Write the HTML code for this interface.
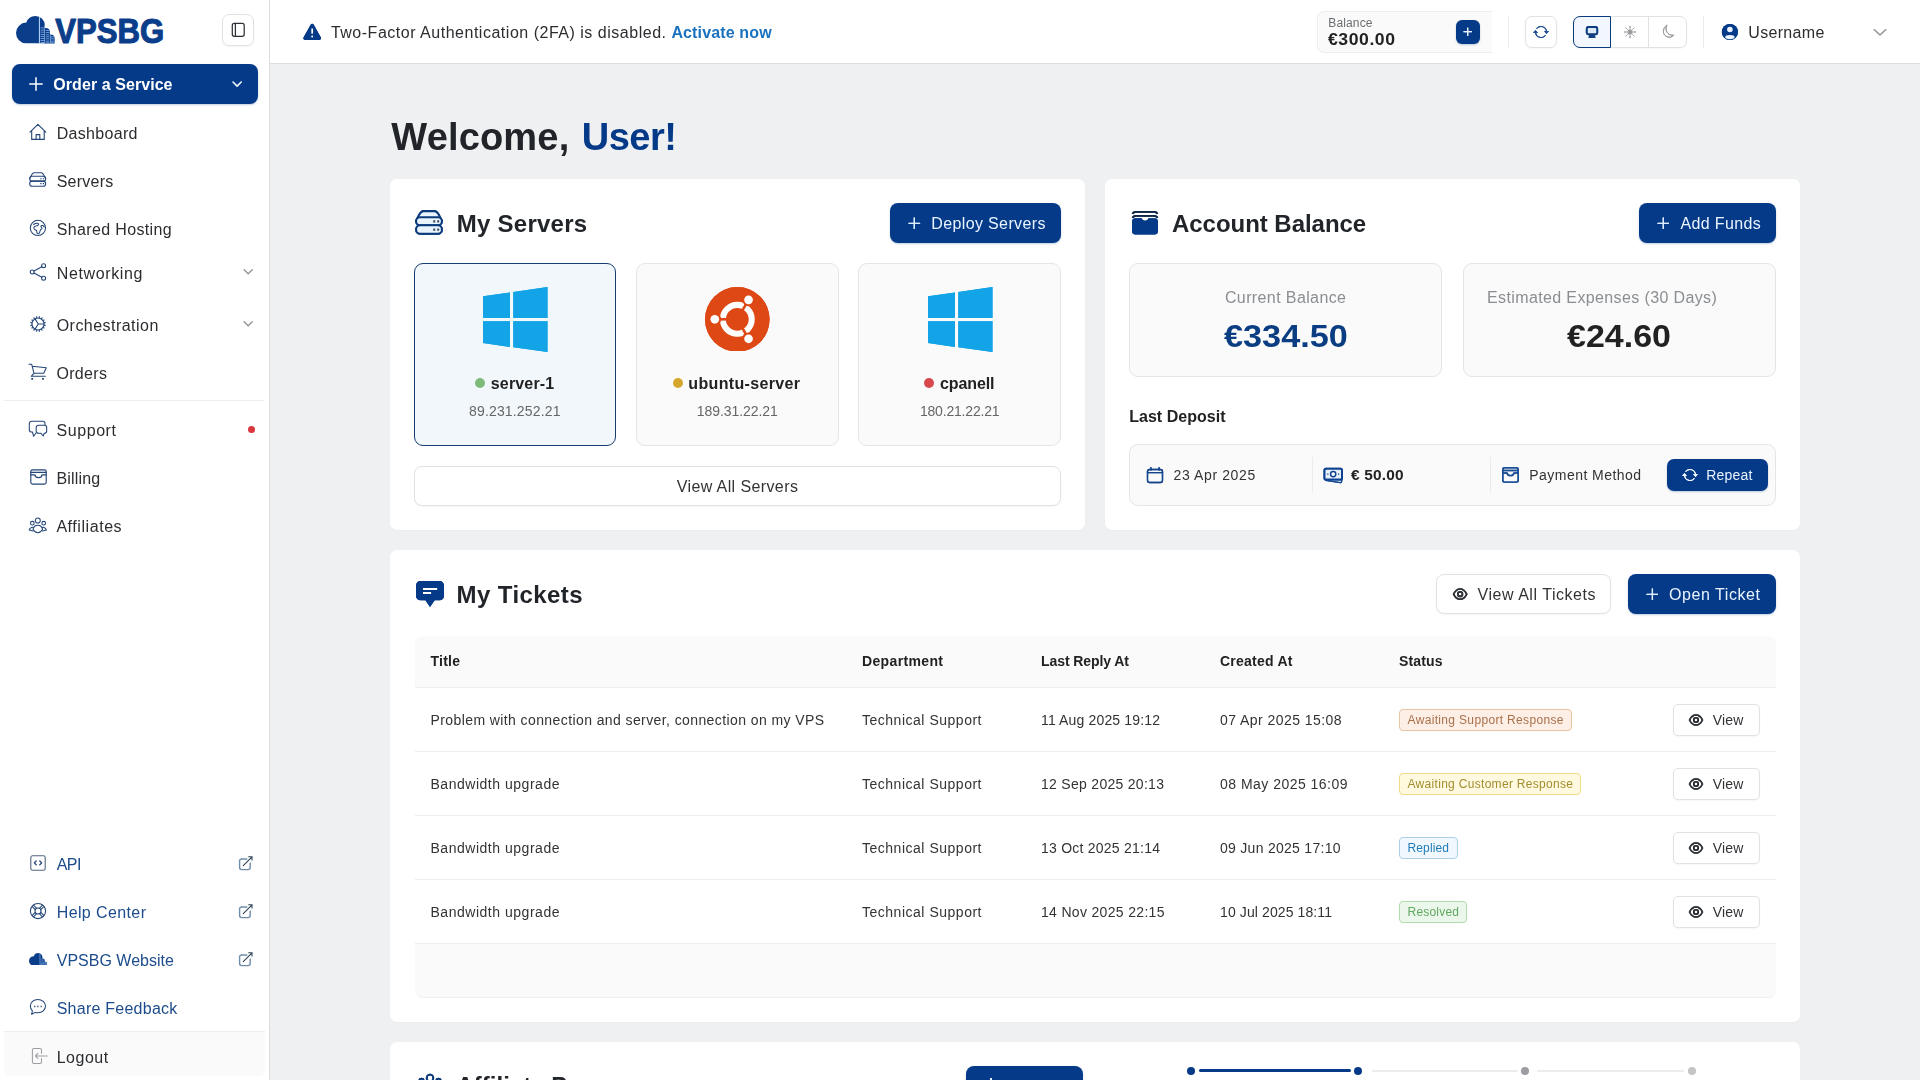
<!DOCTYPE html>
<html lang="en"><head><meta charset="utf-8"><title>VPSBG Dashboard</title>
<style>
*{box-sizing:border-box;margin:0;padding:0}
html,body{width:1920px;height:1080px;overflow:hidden}
body{position:relative;background:#eff0f1;font-family:"Liberation Sans",sans-serif;color:#26282b}
.abs,.t,.badge,svg.i{position:absolute}
.t{white-space:pre;display:block}
#texts{position:absolute;left:0;top:0;width:1920px;height:1080px;will-change:transform;pointer-events:none}
.sidebar{left:0;top:0;width:270px;height:1080px;background:#fff;border-right:1px solid #dcdcdd}
.topbar{left:270px;top:0;width:1650px;height:64px;background:#fff;border-bottom:1px solid #dddddd}
.card{background:#fff;border-radius:7px;box-shadow:0 1px 2px rgba(0,0,0,.02)}
.btn-p{background:#043a88;border-radius:8px;box-shadow:0 1px 2px rgba(6,59,133,.25)}
.btn-o{background:#fff;border:1px solid #e2e2e3;border-radius:8px;box-shadow:0 1px 2px rgba(0,0,0,.04)}
.tile{background:#fafafa;border:1px solid #e5e5e6;border-radius:9px}
.tile.active{background:#f1f7fb;border-color:#173d70}
.soft{background:#fafafa;border:1px solid #e5e5e6;border-radius:9px}
.vline{width:1px;background:#ebebec}
.hline{height:1px;background:#eeeeef}
.dot{border-radius:50%}
.badge{height:22px;border:1px solid;border-radius:4px}

</style></head>
<body>
<aside class="abs sidebar"></aside>
<header class="abs topbar"></header>

<!-- sidebar pieces -->
<div class="abs btn-o" style="left:222px;top:14px;width:32px;height:32px;border-radius:7px"></div>
<div class="abs btn-p" style="left:12px;top:64px;width:246px;height:40px;border-radius:8px"></div>
<div class="abs hline" style="left:4px;top:400px;width:260px"></div>
<div class="abs dot" style="left:247.5px;top:425.5px;width:7px;height:7px;background:#d9363e"></div>
<div class="abs" style="left:4px;top:1031px;width:261px;height:45px;background:#fafafa;border-top:1px solid #eeeeef;border-radius:0 0 6px 6px"></div>

<!-- topbar pieces -->
<div class="abs" style="left:1317px;top:11px;width:175px;height:42px;background:#fafafa;border:1px solid #eeeeef;border-right:none;border-radius:7px 0 0 7px"></div>
<div class="abs btn-p" style="left:1456px;top:20px;width:24px;height:24px;border-radius:6px"></div>
<div class="abs vline" style="left:1508px;top:16px;height:32px"></div>
<div class="abs btn-o" style="left:1525px;top:16px;width:32px;height:32px;border-radius:7px"></div>
<div class="abs btn-o" style="left:1573px;top:16px;width:114px;height:32px;border-radius:7px"></div>
<div class="abs vline" style="left:1648px;top:17px;height:30px;background:#e2e2e3"></div>
<div class="abs" style="left:1573px;top:16px;width:38px;height:32px;background:#f1f7fd;border:1.500px solid #0b3b7d;border-radius:7px 0 0 7px"></div>
<div class="abs vline" style="left:1703px;top:16px;height:32px"></div>

<!-- cards -->
<section class="abs card" style="left:390px;top:179px;width:695px;height:351px"></section>
<section class="abs card" style="left:1105px;top:179px;width:695px;height:351px"></section>
<section class="abs card" style="left:390px;top:550px;width:1410px;height:472px"></section>
<section class="abs card" style="left:390px;top:1042px;width:1410px;height:120px"></section>

<!-- my servers -->
<div class="abs btn-p" style="left:890px;top:203px;width:171px;height:40px"></div>
<div class="abs tile active" style="left:414px;top:263px;width:202px;height:183px"></div>
<div class="abs tile" style="left:636px;top:263px;width:203px;height:183px"></div>
<div class="abs tile" style="left:858px;top:263px;width:203px;height:183px"></div>
<div class="abs dot" style="left:475px;top:378px;width:10px;height:10px;background:#7dbb78"></div>
<div class="abs dot" style="left:673.3px;top:378px;width:10px;height:10px;background:#d4a72c"></div>
<div class="abs dot" style="left:924px;top:378px;width:10px;height:10px;background:#d9484c"></div>
<div class="abs btn-o" style="left:414px;top:466px;width:647px;height:40px;border-radius:8px"></div>

<!-- account balance -->
<div class="abs btn-p" style="left:1639px;top:203px;width:137px;height:40px"></div>
<div class="abs soft" style="left:1129px;top:263px;width:313px;height:114px"></div>
<div class="abs soft" style="left:1463px;top:263px;width:313px;height:114px"></div>
<div class="abs soft" style="left:1129px;top:444px;width:647px;height:62px"></div>
<div class="abs vline" style="left:1312px;top:457px;height:36px"></div>
<div class="abs vline" style="left:1490px;top:457px;height:36px"></div>
<div class="abs btn-p" style="left:1667px;top:459px;width:101px;height:32px;border-radius:7px"></div>

<!-- tickets -->
<div class="abs btn-o" style="left:1436px;top:574px;width:175px;height:40px"></div>
<div class="abs btn-p" style="left:1628px;top:574px;width:148px;height:40px"></div>
<div class="abs" style="left:415px;top:636px;width:1361px;height:52px;background:#fafafa;border-bottom:1px solid #eeeeef;border-radius:8px 8px 0 0"></div>
<div class="abs hline" style="left:415px;top:751px;width:1361px"></div>
<div class="abs hline" style="left:415px;top:815px;width:1361px"></div>
<div class="abs hline" style="left:415px;top:879px;width:1361px"></div>
<div class="abs" style="left:415px;top:943px;width:1361px;height:55px;background:#fafafa;border-top:1px solid #eeeeef;border-bottom:1px solid #eeeeef;border-radius:0 0 8px 8px"></div>
<div class="abs btn-o" style="left:1673px;top:704px;width:87px;height:32px;border-radius:5px"></div>
<div class="abs btn-o" style="left:1673px;top:768px;width:87px;height:32px;border-radius:5px"></div>
<div class="abs btn-o" style="left:1673px;top:832px;width:87px;height:32px;border-radius:5px"></div>
<div class="abs btn-o" style="left:1673px;top:896px;width:87px;height:32px;border-radius:5px"></div>
<div class="badge" style="left:1399px;top:709.0px;width:172.5px;background:#fdeee6;border-color:#e9c4a2"></div>
<div class="badge" style="left:1399px;top:773.0px;width:181.5px;background:#fff9e0;border-color:#f1dc86"></div>
<div class="badge" style="left:1399px;top:837.0px;width:58.5px;background:#f1f8fd;border-color:#a9d0ea"></div>
<div class="badge" style="left:1399px;top:901.0px;width:67.5px;background:#ecf7ec;border-color:#b0dcb0"></div>


<!-- affiliate peek -->
<div class="abs btn-p" style="left:966px;top:1066px;width:117px;height:40px"></div>
<div class="abs" style="left:1198.5px;top:1069px;width:152px;height:3px;background:#043a88;border-radius:2px"></div>
<div class="abs" style="left:1372px;top:1070px;width:146px;height:2px;background:#ececed;border-radius:1px"></div>
<div class="abs" style="left:1537px;top:1070px;width:147px;height:2px;background:#ececed;border-radius:1px"></div>
<div class="abs dot" style="left:1186.5px;top:1066.5px;width:8px;height:8px;background:#043a88"></div>
<div class="abs dot" style="left:1353.5px;top:1066.5px;width:8px;height:8px;background:#043a88"></div>
<div class="abs dot" style="left:1521px;top:1066.5px;width:8px;height:8px;background:#9b9da0"></div>
<div class="abs dot" style="left:1688px;top:1066.5px;width:8px;height:8px;background:#c4c5c7"></div>
<div class="abs" style="left:990px;top:1077.5px;width:1.500px;height:3px;background:#e8f0ff"></div>
<svg class="i" style="left:16px;top:14px" width="152" height="34" viewBox="0 0 152 34"><defs>
<clipPath id="cb"><rect x="0" y="0" width="38.9" height="27.4"/></clipPath>
<clipPath id="cl"><circle cx="10.4" cy="17" r="10.4"/><circle cx="19.4" cy="9.5" r="9.5"/><rect x="10" y="9.6" width="18.3" height="18"/><path d="M28.2 28V11.9h1.8a3.9 3.9 0 0 1 3.9 3.9V28z"/><path d="M33.8 28V18.600h1.100a3.900 3.900 0 0 1 3.900 3.900V28z"/></clipPath>
<g id="cloud"><g clip-path="url(#cb)"><g clip-path="url(#cl)">
<rect x="0" y="0" width="39" height="28" fill="#0a3e8a"/>
<g fill="#8fb8ea">
<rect x="22.9" y="0" width="1.1" height="28" fill="#a9cdf3"/>
<rect x="28.300" y="9" width="0.700" height="19"/>
<rect x="34" y="16" width="0.700" height="12"/>
<path d="M24.6 11.6h3.7v.75h-3.7zM24.6 13.7h3.7v.75h-3.7zM24.6 15.8h3.7v.75h-3.7zM24.6 17.9h3.7v.75h-3.7zM24.6 20h3.7v.75h-3.7zM24.6 22.1h3.7v.75h-3.7zM24.6 24.2h3.7v.75h-3.7zM24.6 26.3h3.7v.75h-3.7z"/>
<path d="M29.8 14.2h3.5v.75h-3.5zM29.8 16.3h3.5v.75h-3.5zM29.8 18.4h3.5v.75h-3.5zM29.8 20.5h3.5v.75h-3.5zM29.8 22.6h3.5v.75h-3.5zM29.8 24.7h3.5v.75h-3.5zM29.8 26.6h3.5v.8h-3.5z"/>
<path d="M34.8 20.5h3.6v.75h-3.6zM34.8 22.6h3.8v.75h-3.8zM34.8 24.7h4v.75h-4zM34.8 26.6h4v.8h-4z"/>
</g></g></g></g>
</defs><use href="#cloud" x="0" y="2"/><text x="39.2" y="29" font-family="Liberation Sans, sans-serif" font-weight="700" font-size="34.6" fill="#0a3e8a" stroke="#0a3e8a" stroke-width="1.1" stroke-linejoin="round" textLength="109" lengthAdjust="spacingAndGlyphs">VPSBG</text></svg>
<svg class="i" style="left:29px;top:952.6px" width="18.2" height="12.9" viewBox="0 0 38.9 27.4"><use href="#cloud"/></svg>
<svg class="i" style="left:231px;top:22px" width="15" height="16" viewBox="0 0 15 16" fill="none" stroke="#2f3236" stroke-width="1.25" stroke-linecap="round" stroke-linejoin="round" ><rect x="1.3" y="1.4" width="11.9" height="12.9" rx="2"/><path d="M4.4 1.4v12.9"/></svg>
<svg class="i" style="left:28px;top:76px" width="16" height="16" viewBox="0 0 16 16" fill="none" stroke="#fff" stroke-width="1.5" stroke-linecap="round" stroke-linejoin="round" ><path d="M8 1.8v12.4M1.8 8h12.4"/></svg>
<svg class="i" style="left:231px;top:79px" width="12" height="10" viewBox="0 0 12 10" fill="none" stroke="#eef8ff" stroke-width="1.6" stroke-linecap="round" stroke-linejoin="round" ><path d="M2 3l4.100 4.100 4.100-4.100"/></svg>
<svg class="i" style="left:29px;top:123px" width="19" height="18" viewBox="0 0 19 18" fill="none" stroke="#234577" stroke-width="1.1" stroke-linecap="round" stroke-linejoin="round" ><path d="M1 9.2L8.9 1.4l7.9 7.8M2.7 7.8v8.6h12.5V7.8M7.1 16.4v-4.8h3.7v4.8"/></svg>
<svg class="i" style="left:29.4px;top:171.8px" width="18.4" height="15.9" viewBox="0 0 18.4 15.9" fill="none" stroke="#234577" stroke-width="1.75" stroke-linecap="round" stroke-linejoin="round" ><g transform="scale(0.62,0.62)"><path d="M1.2 10.6C3 7.5 4.6 1.1 8.4 1.1h11.2c3.8 0 5.4 6.4 7.2 9.5" fill="none"/><rect x="1.1" y="6.9" width="25.8" height="7.8" rx="3.9" fill="none"/><rect x="1.1" y="14.7" width="25.8" height="8.2" rx="4.1" fill="none"/><path d="M18.2 9.9h2v2h-2zM22.2 9.9h2v2h-2zM18.2 17.9h2v2h-2zM22.2 17.9h2v2h-2z" fill="#234577" stroke="none"/></g></svg>
<svg class="i" style="left:29px;top:219px" width="18" height="18" viewBox="0 0 18 18" fill="none" stroke="#234577" stroke-width="1.05" stroke-linecap="round" stroke-linejoin="round" ><circle cx="8.9" cy="8.9" r="7.6"/><path d="M4.60 5.60C5.20 5.27 5.17 5.07 6.40 4.60C7.63 4.13 7.23 4.03 8.30 4.20C9.37 4.37 9.50 4.33 9.60 5.10C9.70 5.87 9.63 5.83 8.60 6.50C7.57 7.17 7.73 6.43 6.50 7.10C5.27 7.77 5.20 7.43 4.90 8.50C4.60 9.57 4.73 9.27 5.60 10.30C6.47 11.33 6.70 10.43 7.50 11.60C8.30 12.77 7.40 12.73 8.00 13.80C8.60 14.87 8.43 15.00 9.30 14.80C10.17 14.60 9.87 14.50 10.60 13.20C11.33 11.90 10.70 12.27 11.50 10.90C12.30 9.53 12.87 10.27 13.00 9.10C13.13 7.93 11.70 8.23 11.90 7.40C12.10 6.57 12.50 6.40 13.60 6.60C14.70 6.80 14.67 7.53 15.20 8.00"/></svg>
<svg class="i" style="left:29px;top:262px" width="19" height="20" viewBox="0 0 19 20" fill="none" stroke="#234577" stroke-width="1.05" stroke-linecap="round" stroke-linejoin="round" ><circle cx="14.6" cy="3.7" r="2"/><circle cx="3.2" cy="10" r="2"/><circle cx="14.6" cy="16.2" r="2"/><path d="M5 9l7.8-4.300M5 11l7.800 4.300"/></svg>
<svg class="i" style="left:28.8px;top:315px" width="18" height="18" viewBox="0 0 18 18" fill="none" stroke="#234577" stroke-width="1.05" stroke-linecap="round" stroke-linejoin="round" ><circle cx="9" cy="9" r="6"/><path d="M15.08 10.21L16.65 10.52M14.16 12.44L15.49 13.33M12.44 14.16L13.33 15.49M10.21 15.08L10.52 16.65M7.79 15.08L7.48 16.65M5.56 14.16L4.67 15.49M3.84 12.44L2.51 13.33M2.92 10.21L1.35 10.52M2.92 7.79L1.35 7.48M3.84 5.56L2.51 4.67M5.56 3.84L4.67 2.51M7.79 2.92L7.48 1.35M10.21 2.92L10.52 1.35M12.44 3.84L13.33 2.51M14.16 5.56L15.49 4.67M15.08 7.79L16.65 7.48" stroke-width="1.250" stroke-linecap="butt"/><path d="M9.30 9.00L14.90 9.00M9.30 9.00L6.05 14.11M9.30 9.00L6.05 3.89"/></svg>
<svg class="i" style="left:28px;top:363px" width="20" height="18" viewBox="0 0 20 18" fill="none" stroke="#234577" stroke-width="1.05" stroke-linecap="round" stroke-linejoin="round" ><path d="M1 1.300h2.700l2.300 9h9.700l2.600-5.600L4.400 3.200M6 10.300l-2.800 3h14.100"/><path d="M3.300 15h1.800v1.800H3.300zM14.100 15h1.800v1.800h-1.800z" fill="#234577" stroke="none"/></svg>
<svg class="i" style="left:28px;top:420px" width="20" height="18" viewBox="0 0 20 18" fill="none" stroke="#234577" stroke-width="1.05" stroke-linecap="round" stroke-linejoin="round" ><path d="M17 4.700V3.500c0-1.300-1-2.300-2.300-2.300H3.600c-1.300 0-2.300 1-2.300 2.300v6.200c0 1.300 1 2.300 2.300 2.300h.9l1.100 4.300L8 13"/><path d="M10.500 5.200h5.900c1.300 0 2.300 1 2.300 2.300v3.500c0 1.300-1 2.300-2.300 2.300h-.3l-.8 2.700-2.300-2.700h-2.500c-1.300 0-2.300-1-2.300-2.300V7.500c0-1.300 1-2.300 2.300-2.300z"/></svg>
<svg class="i" style="left:29.5px;top:468.9px" width="18" height="17" viewBox="0 0 18 17" fill="none" stroke="#234577" stroke-width="1.15" stroke-linecap="round" stroke-linejoin="round" ><g transform="scale(1)"><rect x="0.800" y="0.800" width="15.400" height="14.300" rx="1.800"/><path d="M0.800 3.400h15.400M0.800 5.900h4.200c.2 1.600 1.500 2.700 3.500 2.700s3.300-1.100 3.500-2.700h4.200"/></g></svg>
<svg class="i" style="left:28px;top:516px" width="20" height="18" viewBox="0 0 20 18" fill="none" stroke="#234577" stroke-width="1.05" stroke-linecap="round" stroke-linejoin="round" ><circle cx="9.800" cy="4.500" r="2.500"/><circle cx="4.300" cy="7.200" r="1.850"/><circle cx="15.700" cy="7.200" r="1.850"/><path d="M5 13.300c.6-2.400 2.400-4 4.800-4s4.200 1.600 4.800 4c-1.200 2.200-2.900 3.400-4.800 3.400S6.200 15.500 5 13.300z"/><path d="M5.700 11.500c-.9-.3-1.700-.3-2.200 0C2.400 12 1.600 13 1.200 14l3.800 1M13.900 11.500c.9-.3 1.700-.3 2.200 0 1.100.5 1.900 1.500 2.300 2.500l-3.800 1"/></svg>
<svg class="i" style="left:242px;top:267px" width="13" height="10" viewBox="0 0 13 10" fill="none" stroke="#8d9095" stroke-width="1.25" stroke-linecap="round" stroke-linejoin="round" ><path d="M2.100 2.700l4.100 4.100 4.100-4.100"/></svg>
<svg class="i" style="left:242px;top:319px" width="13" height="10" viewBox="0 0 13 10" fill="none" stroke="#8d9095" stroke-width="1.25" stroke-linecap="round" stroke-linejoin="round" ><path d="M2.100 2.700l4.100 4.100 4.100-4.100"/></svg>
<svg class="i" style="left:30px;top:855px" width="17" height="17" viewBox="0 0 17 17" fill="none" stroke="#234577" stroke-width="1.1" stroke-linecap="round" stroke-linejoin="round" ><rect x="0.800" y="0.800" width="14.400" height="14.400" rx="1.800" stroke="#52657f"/><path d="M6.200 6L4.300 7.900l1.900 1.900M9.800 6l1.900 1.900-1.900 1.900" stroke-width="1.300"/></svg>
<svg class="i" style="left:28.9px;top:901.9px" width="18" height="18" viewBox="0 0 18 18" fill="none" stroke="#234577" stroke-width="1.05" stroke-linecap="round" stroke-linejoin="round" ><circle cx="9" cy="9" r="7.600"/><circle cx="9" cy="9" r="3"/><path d="M11.72 10.38L14.83 13.49M10.38 11.72L13.49 14.83M7.62 11.72L4.51 14.83M6.28 10.38L3.17 13.49M6.28 7.62L3.17 4.51M7.62 6.28L4.51 3.17M10.38 6.28L13.49 3.17M11.72 7.62L14.83 4.51"/></svg>
<svg class="i" style="left:29px;top:998px" width="18" height="18" viewBox="0 0 18 18" fill="none" stroke="#234577" stroke-width="1.05" stroke-linecap="round" stroke-linejoin="round" ><path d="M8.900 1.400c4.200 0 7.600 3 7.600 6.700s-3.400 6.700-7.600 6.700c-.9 0-1.800-.1-2.600-.4l-3.700 1.900.8-3.500C2.100 11.600 1.300 9.900 1.300 8.100c0-3.700 3.400-6.700 7.600-6.700z"/><path d="M5 7.800h1.400v1.400H5zM8.200 7.800h1.400v1.400H8.200zM11.500 7.800h1.400v1.400h-1.400z" fill="#52657f" stroke="none"/></svg>
<svg class="i" style="left:31px;top:1047px" width="18" height="18" viewBox="0 0 18 18" fill="none" stroke="#9b9da0" stroke-width="1.05" stroke-linecap="round" stroke-linejoin="round" ><path d="M10.500 6.300V3.100c0-.9-.7-1.600-1.600-1.600H3c-.9 0-1.600.7-1.600 1.600v11.800c0 .9.700 1.600 1.600 1.600h5.900c.9 0 1.600-.7 1.600-1.600v-3.300"/><path d="M16.300 8.900H4.600M6.900 6.300L4.400 8.900l2.500 2.600"/></svg>
<svg class="i" style="left:238px;top:855.5px" width="16" height="15" viewBox="0 0 16 15" fill="none"  ><path d="M9.300 3H3.600c-1.100 0-2 .9-2 2v6.600c0 1.100.9 2 2 2h6.600c1.100 0 2-.9 2-2V6.500" stroke="#6e8cab" stroke-width="1.400"/><path d="M5 9.800l9-9M10.300.8H14v3.700" stroke="#2c3f57" stroke-width="1.100"/></svg>
<svg class="i" style="left:238px;top:903.5px" width="16" height="15" viewBox="0 0 16 15" fill="none"  ><path d="M9.300 3H3.600c-1.100 0-2 .9-2 2v6.600c0 1.100.9 2 2 2h6.600c1.100 0 2-.9 2-2V6.500" stroke="#6e8cab" stroke-width="1.400"/><path d="M5 9.800l9-9M10.300.8H14v3.700" stroke="#2c3f57" stroke-width="1.100"/></svg>
<svg class="i" style="left:238px;top:951.5px" width="16" height="15" viewBox="0 0 16 15" fill="none"  ><path d="M9.300 3H3.600c-1.100 0-2 .9-2 2v6.600c0 1.100.9 2 2 2h6.600c1.100 0 2-.9 2-2V6.500" stroke="#6e8cab" stroke-width="1.400"/><path d="M5 9.800l9-9M10.300.8H14v3.700" stroke="#2c3f57" stroke-width="1.100"/></svg>
<svg class="i" style="left:302px;top:22px" width="21" height="19" viewBox="0 0 21 19" fill="none"  ><path d="M10.200 1.700c.6 0 1.100.3 1.400.9l7.300 13c.6 1.100-.100 2.300-1.400 2.300H2.900c-1.300 0-2-1.200-1.400-2.300l7.300-13c.3-.6.800-.9 1.400-.9z" fill="#043a88" stroke="none"/><path d="M10.200 6.500v5.200" stroke="#fff" stroke-width="1.700"/><circle cx="10.200" cy="14.400" r="1" fill="#fff" stroke="none"/></svg>
<svg class="i" style="left:1463.3px;top:27.3px" width="9.4" height="9.4" viewBox="0 0 9.4 9.4" fill="none" stroke="#eaf2ff" stroke-width="1.2" stroke-linecap="round" stroke-linejoin="round" ><path d="M4.7 1v7.4M1 4.7h7.4"/></svg>
<svg class="i" style="left:1533px;top:24px;color:#1f4f95" width="16" height="16" viewBox="0 0 16 16" fill="#1f4f95"><path d="M11.534 7h3.932a.25.25 0 0 1 .192.410l-1.966 2.360a.25.25 0 0 1-.384 0l-1.966-2.360a.25.25 0 0 1 .192-.410zm-11 2h3.932a.25.25 0 0 0 .192-.410L2.692 6.230a.25.25 0 0 0-.384 0L.342 8.590A.25.25 0 0 0 .534 9z"/><path d="M8 3c-1.552 0-2.940.707-3.857 1.818a.5.5 0 1 1-.771-.636A6.002 6.002 0 0 1 13.917 7H12.900A5.002 5.002 0 0 0 8 3zM3.100 9a5.002 5.002 0 0 0 8.757 2.182.5.5 0 1 1 .771.636A6.002 6.002 0 0 1 2.083 9H3.100z"/></svg>
<svg class="i" style="left:1585px;top:25px" width="14" height="14" viewBox="0 0 14 14" fill="none"  ><rect x="1.800" y="2" width="10.400" height="7.300" rx="1.800" fill="#dbe8f7" stroke="#0b3b7d" stroke-width="1.900"/><path d="M4.300 10.200h5.400l.9 2.500H3.400z" fill="#0b3b7d" stroke="none"/></svg>
<svg class="i" style="left:1621.8px;top:24px" width="16" height="16" viewBox="0 0 16 16" fill="none" stroke="#a4a6a9" stroke-width="1" stroke-linecap="round" stroke-linejoin="round" ><circle cx="8" cy="8" r="2.500" fill="#9a9c9f" stroke="none"/><path d="M11.90 8.00L13.70 8.00M10.76 10.76L12.03 12.03M8.00 11.90L8.00 13.70M5.24 10.76L3.97 12.03M4.10 8.00L2.30 8.00M5.24 5.24L3.97 3.97M8.00 4.10L8.00 2.30M10.76 5.24L12.03 3.97"/></svg>
<svg class="i" style="left:1660px;top:24px" width="16" height="16" viewBox="0 0 16 16" fill="none" stroke="#9a9c9f" stroke-width="1" stroke-linecap="round" stroke-linejoin="round" ><path d="M6.700 1.600C4.200 2.900 2.900 5.700 3.500 8.500c.7 3.200 3.800 5.200 7 4.600 1.300-.3 2.400-.9 3.200-1.900-3.600.500-6.800-1.700-7.500-5.100-.3-1.600-.100-3.200.5-4.500z"/></svg>
<svg class="i" style="left:1721px;top:23px" width="18" height="18" viewBox="0 0 18 18" fill="none"  ><circle cx="8.900" cy="9" r="8.100" fill="#043a88" stroke="none"/><circle cx="8.900" cy="6.500" r="2.800" fill="#eef4ff" stroke="none"/><ellipse cx="8.900" cy="14.100" rx="4.700" ry="2.100" fill="#eef4ff" stroke="none"/></svg>
<svg class="i" style="left:1873px;top:28px" width="14" height="9" viewBox="0 0 14 9" fill="none" stroke="#9a9c9f" stroke-width="1.1" stroke-linecap="round" stroke-linejoin="round" ><path d="M1.200 1.500l5.800 5.500 5.800-5.500"/></svg>
<svg class="i" style="left:415.4px;top:210.2px" width="29.0" height="26.0" viewBox="0 0 29.0 26.0" fill="none" stroke="#0b3b7d" stroke-width="2.0" stroke-linecap="round" stroke-linejoin="round" ><g transform="scale(1.0,1.04)"><path d="M1.2 10.6C3 7.5 4.6 1.1 8.4 1.1h11.2c3.8 0 5.4 6.4 7.2 9.5" fill="#eaf4fc"/><rect x="1.1" y="6.9" width="25.8" height="7.8" rx="3.9" fill="#eaf4fc"/><rect x="1.1" y="14.7" width="25.8" height="8.2" rx="4.1" fill="#eaf4fc"/><path d="M18.2 9.9h2v2h-2zM22.2 9.9h2v2h-2zM18.2 17.9h2v2h-2zM22.2 17.9h2v2h-2z" fill="#3a4a5c" stroke="none"/></g></svg>
<svg class="i" style="left:908.1px;top:216.7px" width="12.6" height="12.6" viewBox="0 0 12.6 12.6" fill="none" stroke="#dcecff" stroke-width="1.3" stroke-linecap="round" stroke-linejoin="round" ><path d="M6.3 1v10.6M1 6.3h10.6"/></svg>
<svg class="i" style="left:1656.6px;top:216.7px" width="12.6" height="12.6" viewBox="0 0 12.6 12.6" fill="none" stroke="#dcecff" stroke-width="1.3" stroke-linecap="round" stroke-linejoin="round" ><path d="M6.3 1v10.6M1 6.3h10.6"/></svg>
<svg class="i" style="left:1645.6px;top:587.6px" width="12.8" height="12.8" viewBox="0 0 12.8 12.8" fill="none" stroke="#dcecff" stroke-width="1.3" stroke-linecap="round" stroke-linejoin="round" ><path d="M6.4 1v10.8M1 6.4h10.8"/></svg>
<svg class="i" style="left:1131px;top:210px" width="28" height="26" viewBox="0 0 28 26" fill="none"  ><path d="M1.100 9.200c0-1.800 1.400-3.200 3.200-3.200h6.500c.3 1.700 1.600 2.900 3.300 2.900s3-1.200 3.300-2.900h6.300c1.800 0 3.200 1.400 3.200 3.200v12.400c0 1.800-1.400 3.200-3.200 3.200H4.300c-1.800 0-3.200-1.400-3.200-3.200z" transform="translate(0,3.200) scale(1,.86)" fill="#043a88" stroke="none"/><path d="M1.400 3.800c.9-1.300 1.900-1.900 3.400-1.900h18.400c1.500 0 2.500.6 3.400 1.900M1.400 7.700c.9-1.300 1.900-1.900 3.400-1.900h18.400c1.500 0 2.500.6 3.400 1.900" stroke="#0c2748" stroke-width="1.700" fill="none"/></svg>
<svg class="i" style="left:482.7px;top:286.6px" width="65" height="65" viewBox="0 0 65 65" fill="#12a4e6"><path d="M0 9.200L27 5.400v25.700H0zM30.300 4.900L64.500 0v31.100H30.300zM0 34.200h27v25.700L0 56zM30.300 34.200h34.200V65l-34.200-4.800z"/></svg>
<svg class="i" style="left:927.9px;top:286.6px" width="65" height="65" viewBox="0 0 65 65" fill="#12a4e6"><path d="M0 9.200L27 5.400v25.700H0zM30.300 4.900L64.500 0v31.100H30.300zM0 34.200h27v25.700L0 56zM30.300 34.200h34.200V65l-34.200-4.800z"/></svg>
<svg class="i" style="left:705.0px;top:286.5px" width="64.6" height="64.6" viewBox="0 0 64 64"><circle cx="32" cy="32" r="32" fill="#dd4814"/><circle cx="32" cy="32" r="14.300" fill="none" stroke="#fff" stroke-width="6"/><path d="M36.50 39.79L42.00 49.32" stroke="#dd4814" stroke-width="2.600"/><path d="M23.00 32.00L12.00 32.00" stroke="#dd4814" stroke-width="2.600"/><path d="M36.50 24.21L42.00 14.68" stroke="#dd4814" stroke-width="2.600"/><circle cx="9.70" cy="32.00" r="6.300" fill="#dd4814"/><circle cx="9.70" cy="32.00" r="4.300" fill="#fff"/><circle cx="43.15" cy="12.69" r="6.300" fill="#dd4814"/><circle cx="43.15" cy="12.69" r="4.300" fill="#fff"/><circle cx="43.15" cy="51.31" r="6.300" fill="#dd4814"/><circle cx="43.15" cy="51.31" r="4.300" fill="#fff"/></svg>
<svg class="i" style="left:1146px;top:466px" width="18" height="18" viewBox="0 0 18 18" fill="none" stroke="#15458d" stroke-width="1.35" stroke-linecap="round" stroke-linejoin="round" ><rect x="1.500" y="3.500" width="15" height="13" rx="2.200"/><path d="M1.500 6.600h15M4.900 1.700v2.200M13.100 1.700v2.200"/></svg>
<svg class="i" style="left:1323px;top:467px" width="21" height="17" viewBox="0 0 21 17" fill="none"  ><path d="M2.700 13.300l14.600 2.300c.6.100 1.100-.3 1.200-.9l.300-1.700" stroke="#1a4e96" stroke-width="1.300" fill="none"/><rect x="1.500" y="1.700" width="17.500" height="10.800" rx="1.600" fill="#e6effa" stroke="#0f4391" stroke-width="2"/><circle cx="10.200" cy="7.100" r="2.600" fill="#fff" stroke="#0f4391" stroke-width="1.500"/><path d="M4.200 7.100h1.200M15 7.100h1.200" stroke="#0f4391" stroke-width="1.300"/></svg>
<svg class="i" style="left:1502px;top:467px" width="18.0" height="17.0" viewBox="0 0 18.0 17.0" fill="none" stroke="#1a4e96" stroke-width="1.45" stroke-linecap="round" stroke-linejoin="round" ><g transform="scale(1.0)"><rect x="0.800" y="0.800" width="15.400" height="14.300" rx="1.800"/><path d="M0.800 3.400h15.400M0.800 5.900h4.200c.2 1.600 1.500 2.700 3.500 2.700s3.300-1.100 3.500-2.700h4.200"/></g></svg>
<svg class="i" style="left:1682px;top:467px;color:#f2f7ff" width="16" height="16" viewBox="0 0 16 16" fill="#f2f7ff"><path d="M11.534 7h3.932a.25.25 0 0 1 .192.410l-1.966 2.360a.25.25 0 0 1-.384 0l-1.966-2.360a.25.25 0 0 1 .192-.410zm-11 2h3.932a.25.25 0 0 0 .192-.410L2.692 6.230a.25.25 0 0 0-.384 0L.342 8.590A.25.25 0 0 0 .534 9z"/><path d="M8 3c-1.552 0-2.940.707-3.857 1.818a.5.5 0 1 1-.771-.636A6.002 6.002 0 0 1 13.917 7H12.900A5.002 5.002 0 0 0 8 3zM3.100 9a5.002 5.002 0 0 0 8.757 2.182.5.5 0 1 1 .771.636A6.002 6.002 0 0 1 2.083 9H3.100z"/></svg>
<svg class="i" style="left:415px;top:580px" width="30" height="28" viewBox="0 0 30 28" fill="none"  ><path d="M5.400 1h19.200C27 1 29 3 29 5.400v10.500c0 2.400-2 4.400-4.400 4.400h-4.900L15 27l-4.600-6.700h-5C3 20.300 1 18.300 1 15.900V5.400C1 3 3 1 5.400 1z" fill="#043a88" stroke="none"/><path d="M8 8h14.200v2.100H8zM8 12h8.100v2.100H8z" fill="#fff" stroke="none"/></svg>
<svg class="i" style="left:1452.1px;top:585.9px;color:#2f3236" width="16.3" height="16.3" viewBox="0 0 16 16" fill="#2f3236"><path d="M1.500 8C3.100 4.700 5.500 2.950 8 2.950s4.900 1.750 6.500 5.050c-1.600 3.300-4 5.050-6.500 5.050S3.100 11.300 1.500 8z" fill="none" stroke="currentColor" stroke-width="1.500" stroke-linejoin="round"/><circle cx="8" cy="8" r="2.250" fill="none" stroke="currentColor" stroke-width="1.700"/></svg>
<svg class="i" style="left:1688px;top:712px;color:#2f3236" width="16" height="16" viewBox="0 0 16 16" fill="#2f3236"><path d="M1.500 8C3.100 4.700 5.500 2.950 8 2.950s4.900 1.750 6.500 5.050c-1.600 3.300-4 5.050-6.500 5.050S3.100 11.300 1.500 8z" fill="none" stroke="currentColor" stroke-width="1.500" stroke-linejoin="round"/><circle cx="8" cy="8" r="2.250" fill="none" stroke="currentColor" stroke-width="1.700"/></svg>
<svg class="i" style="left:1688px;top:776px;color:#2f3236" width="16" height="16" viewBox="0 0 16 16" fill="#2f3236"><path d="M1.500 8C3.100 4.700 5.500 2.950 8 2.950s4.900 1.750 6.500 5.050c-1.600 3.300-4 5.050-6.500 5.050S3.100 11.300 1.500 8z" fill="none" stroke="currentColor" stroke-width="1.500" stroke-linejoin="round"/><circle cx="8" cy="8" r="2.250" fill="none" stroke="currentColor" stroke-width="1.700"/></svg>
<svg class="i" style="left:1688px;top:840px;color:#2f3236" width="16" height="16" viewBox="0 0 16 16" fill="#2f3236"><path d="M1.500 8C3.100 4.700 5.500 2.950 8 2.950s4.900 1.750 6.500 5.050c-1.600 3.300-4 5.050-6.500 5.050S3.100 11.300 1.500 8z" fill="none" stroke="currentColor" stroke-width="1.500" stroke-linejoin="round"/><circle cx="8" cy="8" r="2.250" fill="none" stroke="currentColor" stroke-width="1.700"/></svg>
<svg class="i" style="left:1688px;top:904px;color:#2f3236" width="16" height="16" viewBox="0 0 16 16" fill="#2f3236"><path d="M1.500 8C3.100 4.700 5.500 2.950 8 2.950s4.900 1.750 6.500 5.050c-1.600 3.300-4 5.050-6.500 5.050S3.100 11.300 1.500 8z" fill="none" stroke="currentColor" stroke-width="1.500" stroke-linejoin="round"/><circle cx="8" cy="8" r="2.250" fill="none" stroke="currentColor" stroke-width="1.700"/></svg>
<svg class="i" style="left:416px;top:1070px" width="30" height="12" viewBox="0 0 30 12" fill="none" stroke="#0b3b7d" stroke-width="1.8" stroke-linecap="round" stroke-linejoin="round" ><circle cx="14" cy="8" r="3.300"/><circle cx="5.500" cy="11" r="2.300"/><circle cx="22.500" cy="11" r="2.300"/></svg>
<svg class="i" style="left:302px;top:22px" width="21" height="19" viewBox="0 0 21 19" fill="none"  ><path d="M10.200 1.700c.6 0 1.100.3 1.400.9l7.300 13c.6 1.100-.100 2.300-1.400 2.300H2.900c-1.300 0-2-1.200-1.400-2.300l7.300-13c.3-.6.800-.9 1.400-.9z" fill="#043a88" stroke="none"/><path d="M10.200 6.500v5.200" stroke="#fff" stroke-width="1.700"/><circle cx="10.200" cy="14.400" r="1" fill="#fff" stroke="none"/></svg>
<svg class="i" style="left:1463.3px;top:27.3px" width="9.4" height="9.4" viewBox="0 0 9.4 9.4" fill="none" stroke="#eaf2ff" stroke-width="1.2" stroke-linecap="round" stroke-linejoin="round" ><path d="M4.7 1v7.4M1 4.7h7.4"/></svg>
<svg class="i" style="left:1533px;top:24px;color:#1f4f95" width="16" height="16" viewBox="0 0 16 16" fill="#1f4f95"><path d="M11.534 7h3.932a.25.25 0 0 1 .192.410l-1.966 2.360a.25.25 0 0 1-.384 0l-1.966-2.360a.25.25 0 0 1 .192-.410zm-11 2h3.932a.25.25 0 0 0 .192-.410L2.692 6.230a.25.25 0 0 0-.384 0L.342 8.590A.25.25 0 0 0 .534 9z"/><path d="M8 3c-1.552 0-2.940.707-3.857 1.818a.5.5 0 1 1-.771-.636A6.002 6.002 0 0 1 13.917 7H12.900A5.002 5.002 0 0 0 8 3zM3.100 9a5.002 5.002 0 0 0 8.757 2.182.5.5 0 1 1 .771.636A6.002 6.002 0 0 1 2.083 9H3.100z"/></svg>
<svg class="i" style="left:1585px;top:25px" width="14" height="14" viewBox="0 0 14 14" fill="none"  ><rect x="1.800" y="2" width="10.400" height="7.300" rx="1.800" fill="#dbe8f7" stroke="#0b3b7d" stroke-width="1.900"/><path d="M4.300 10.200h5.400l.9 2.500H3.400z" fill="#0b3b7d" stroke="none"/></svg>
<svg class="i" style="left:1621.8px;top:24px" width="16" height="16" viewBox="0 0 16 16" fill="none" stroke="#a4a6a9" stroke-width="1" stroke-linecap="round" stroke-linejoin="round" ><circle cx="8" cy="8" r="2.500" fill="#9a9c9f" stroke="none"/><path d="M11.90 8.00L13.70 8.00M10.76 10.76L12.03 12.03M8.00 11.90L8.00 13.70M5.24 10.76L3.97 12.03M4.10 8.00L2.30 8.00M5.24 5.24L3.97 3.97M8.00 4.10L8.00 2.30M10.76 5.24L12.03 3.97"/></svg>
<svg class="i" style="left:1660px;top:24px" width="16" height="16" viewBox="0 0 16 16" fill="none" stroke="#9a9c9f" stroke-width="1" stroke-linecap="round" stroke-linejoin="round" ><path d="M6.700 1.600C4.200 2.900 2.900 5.700 3.500 8.500c.7 3.200 3.800 5.200 7 4.600 1.300-.3 2.400-.9 3.200-1.900-3.600.500-6.800-1.700-7.500-5.100-.3-1.600-.100-3.200.5-4.500z"/></svg>
<svg class="i" style="left:1721px;top:23px" width="18" height="18" viewBox="0 0 18 18" fill="none"  ><circle cx="8.900" cy="9" r="8.100" fill="#043a88" stroke="none"/><circle cx="8.900" cy="6.500" r="2.800" fill="#eef4ff" stroke="none"/><ellipse cx="8.900" cy="14.100" rx="4.700" ry="2.100" fill="#eef4ff" stroke="none"/></svg>
<svg class="i" style="left:1873px;top:28px" width="14" height="9" viewBox="0 0 14 9" fill="none" stroke="#9a9c9f" stroke-width="1.1" stroke-linecap="round" stroke-linejoin="round" ><path d="M1.200 1.500l5.800 5.500 5.800-5.500"/></svg>
<svg class="i" style="left:415.4px;top:210.2px" width="29.0" height="26.0" viewBox="0 0 29.0 26.0" fill="none" stroke="#0b3b7d" stroke-width="2.0" stroke-linecap="round" stroke-linejoin="round" ><g transform="scale(1.0,1.04)"><path d="M1.2 10.6C3 7.5 4.6 1.1 8.4 1.1h11.2c3.8 0 5.4 6.4 7.2 9.5" fill="#eaf4fc"/><rect x="1.1" y="6.9" width="25.8" height="7.8" rx="3.9" fill="#eaf4fc"/><rect x="1.1" y="14.7" width="25.8" height="8.2" rx="4.1" fill="#eaf4fc"/><path d="M18.2 9.9h2v2h-2zM22.2 9.9h2v2h-2zM18.2 17.9h2v2h-2zM22.2 17.9h2v2h-2z" fill="#3a4a5c" stroke="none"/></g></svg>
<svg class="i" style="left:908.1px;top:216.7px" width="12.6" height="12.6" viewBox="0 0 12.6 12.6" fill="none" stroke="#dcecff" stroke-width="1.3" stroke-linecap="round" stroke-linejoin="round" ><path d="M6.3 1v10.6M1 6.3h10.6"/></svg>
<svg class="i" style="left:1656.6px;top:216.7px" width="12.6" height="12.6" viewBox="0 0 12.6 12.6" fill="none" stroke="#dcecff" stroke-width="1.3" stroke-linecap="round" stroke-linejoin="round" ><path d="M6.3 1v10.6M1 6.3h10.6"/></svg>
<svg class="i" style="left:1645.6px;top:587.6px" width="12.8" height="12.8" viewBox="0 0 12.8 12.8" fill="none" stroke="#dcecff" stroke-width="1.3" stroke-linecap="round" stroke-linejoin="round" ><path d="M6.4 1v10.8M1 6.4h10.8"/></svg>
<svg class="i" style="left:1131px;top:210px" width="28" height="26" viewBox="0 0 28 26" fill="none"  ><path d="M1.100 9.200c0-1.800 1.400-3.200 3.200-3.200h6.500c.3 1.700 1.600 2.900 3.300 2.900s3-1.200 3.300-2.900h6.300c1.800 0 3.200 1.400 3.200 3.200v12.400c0 1.800-1.400 3.200-3.200 3.200H4.300c-1.800 0-3.200-1.400-3.200-3.200z" transform="translate(0,3.200) scale(1,.86)" fill="#043a88" stroke="none"/><path d="M1.400 3.800c.9-1.300 1.900-1.900 3.400-1.900h18.400c1.500 0 2.500.6 3.400 1.900M1.400 7.700c.9-1.300 1.900-1.900 3.400-1.900h18.400c1.500 0 2.500.6 3.400 1.900" stroke="#0c2748" stroke-width="1.700" fill="none"/></svg>
<svg class="i" style="left:482.7px;top:286.6px" width="65" height="65" viewBox="0 0 65 65" fill="#12a4e6"><path d="M0 9.200L27 5.400v25.700H0zM30.300 4.900L64.500 0v31.100H30.300zM0 34.200h27v25.700L0 56zM30.300 34.200h34.200V65l-34.200-4.800z"/></svg>
<svg class="i" style="left:927.9px;top:286.6px" width="65" height="65" viewBox="0 0 65 65" fill="#12a4e6"><path d="M0 9.200L27 5.400v25.700H0zM30.300 4.900L64.500 0v31.100H30.300zM0 34.200h27v25.700L0 56zM30.300 34.200h34.200V65l-34.200-4.800z"/></svg>
<svg class="i" style="left:705.0px;top:286.5px" width="64.6" height="64.6" viewBox="0 0 64 64"><circle cx="32" cy="32" r="32" fill="#dd4814"/><circle cx="32" cy="32" r="14.300" fill="none" stroke="#fff" stroke-width="6"/><path d="M36.50 39.79L42.00 49.32" stroke="#dd4814" stroke-width="2.600"/><path d="M23.00 32.00L12.00 32.00" stroke="#dd4814" stroke-width="2.600"/><path d="M36.50 24.21L42.00 14.68" stroke="#dd4814" stroke-width="2.600"/><circle cx="9.70" cy="32.00" r="6.300" fill="#dd4814"/><circle cx="9.70" cy="32.00" r="4.300" fill="#fff"/><circle cx="43.15" cy="12.69" r="6.300" fill="#dd4814"/><circle cx="43.15" cy="12.69" r="4.300" fill="#fff"/><circle cx="43.15" cy="51.31" r="6.300" fill="#dd4814"/><circle cx="43.15" cy="51.31" r="4.300" fill="#fff"/></svg>
<svg class="i" style="left:1146px;top:466px" width="18" height="18" viewBox="0 0 18 18" fill="none" stroke="#15458d" stroke-width="1.35" stroke-linecap="round" stroke-linejoin="round" ><rect x="1.500" y="3.500" width="15" height="13" rx="2.200"/><path d="M1.500 6.600h15M4.900 1.700v2.200M13.100 1.700v2.200"/></svg>
<svg class="i" style="left:1323px;top:467px" width="21" height="17" viewBox="0 0 21 17" fill="none"  ><path d="M2.700 13.300l14.600 2.300c.6.100 1.100-.3 1.200-.9l.300-1.700" stroke="#1a4e96" stroke-width="1.300" fill="none"/><rect x="1.500" y="1.700" width="17.500" height="10.800" rx="1.600" fill="#e6effa" stroke="#0f4391" stroke-width="2"/><circle cx="10.200" cy="7.100" r="2.600" fill="#fff" stroke="#0f4391" stroke-width="1.500"/><path d="M4.200 7.100h1.200M15 7.100h1.200" stroke="#0f4391" stroke-width="1.300"/></svg>
<svg class="i" style="left:1502px;top:467px" width="18.0" height="17.0" viewBox="0 0 18.0 17.0" fill="none" stroke="#1a4e96" stroke-width="1.45" stroke-linecap="round" stroke-linejoin="round" ><g transform="scale(1.0)"><rect x="0.800" y="0.800" width="15.400" height="14.300" rx="1.800"/><path d="M0.800 3.400h15.400M0.800 5.900h4.200c.2 1.600 1.500 2.700 3.500 2.700s3.300-1.100 3.500-2.700h4.200"/></g></svg>
<svg class="i" style="left:1682px;top:467px;color:#f2f7ff" width="16" height="16" viewBox="0 0 16 16" fill="#f2f7ff"><path d="M11.534 7h3.932a.25.25 0 0 1 .192.410l-1.966 2.360a.25.25 0 0 1-.384 0l-1.966-2.360a.25.25 0 0 1 .192-.410zm-11 2h3.932a.25.25 0 0 0 .192-.410L2.692 6.230a.25.25 0 0 0-.384 0L.342 8.590A.25.25 0 0 0 .534 9z"/><path d="M8 3c-1.552 0-2.940.707-3.857 1.818a.5.5 0 1 1-.771-.636A6.002 6.002 0 0 1 13.917 7H12.900A5.002 5.002 0 0 0 8 3zM3.100 9a5.002 5.002 0 0 0 8.757 2.182.5.5 0 1 1 .771.636A6.002 6.002 0 0 1 2.083 9H3.100z"/></svg>
<svg class="i" style="left:415px;top:580px" width="30" height="28" viewBox="0 0 30 28" fill="none"  ><path d="M5.400 1h19.200C27 1 29 3 29 5.400v10.500c0 2.400-2 4.400-4.400 4.400h-4.900L15 27l-4.600-6.700h-5C3 20.300 1 18.300 1 15.900V5.400C1 3 3 1 5.400 1z" fill="#043a88" stroke="none"/><path d="M8 8h14.200v2.100H8zM8 12h8.100v2.100H8z" fill="#fff" stroke="none"/></svg>
<svg class="i" style="left:1452.1px;top:585.9px;color:#2f3236" width="16.3" height="16.3" viewBox="0 0 16 16" fill="#2f3236"><path d="M1.500 8C3.100 4.700 5.500 2.950 8 2.950s4.900 1.750 6.500 5.050c-1.600 3.300-4 5.050-6.500 5.050S3.100 11.300 1.500 8z" fill="none" stroke="currentColor" stroke-width="1.500" stroke-linejoin="round"/><circle cx="8" cy="8" r="2.250" fill="none" stroke="currentColor" stroke-width="1.700"/></svg>
<svg class="i" style="left:1688px;top:712px;color:#2f3236" width="16" height="16" viewBox="0 0 16 16" fill="#2f3236"><path d="M1.500 8C3.100 4.700 5.500 2.950 8 2.950s4.900 1.750 6.500 5.050c-1.600 3.300-4 5.050-6.500 5.050S3.100 11.300 1.500 8z" fill="none" stroke="currentColor" stroke-width="1.500" stroke-linejoin="round"/><circle cx="8" cy="8" r="2.250" fill="none" stroke="currentColor" stroke-width="1.700"/></svg>
<svg class="i" style="left:1688px;top:776px;color:#2f3236" width="16" height="16" viewBox="0 0 16 16" fill="#2f3236"><path d="M1.500 8C3.100 4.700 5.500 2.950 8 2.950s4.900 1.750 6.500 5.050c-1.600 3.300-4 5.050-6.500 5.050S3.100 11.300 1.500 8z" fill="none" stroke="currentColor" stroke-width="1.500" stroke-linejoin="round"/><circle cx="8" cy="8" r="2.250" fill="none" stroke="currentColor" stroke-width="1.700"/></svg>
<svg class="i" style="left:1688px;top:840px;color:#2f3236" width="16" height="16" viewBox="0 0 16 16" fill="#2f3236"><path d="M1.500 8C3.100 4.700 5.500 2.950 8 2.950s4.900 1.750 6.500 5.050c-1.600 3.300-4 5.050-6.500 5.050S3.100 11.300 1.500 8z" fill="none" stroke="currentColor" stroke-width="1.500" stroke-linejoin="round"/><circle cx="8" cy="8" r="2.250" fill="none" stroke="currentColor" stroke-width="1.700"/></svg>
<svg class="i" style="left:1688px;top:904px;color:#2f3236" width="16" height="16" viewBox="0 0 16 16" fill="#2f3236"><path d="M1.500 8C3.100 4.700 5.500 2.950 8 2.950s4.900 1.750 6.500 5.050c-1.600 3.300-4 5.050-6.500 5.050S3.100 11.300 1.500 8z" fill="none" stroke="currentColor" stroke-width="1.500" stroke-linejoin="round"/><circle cx="8" cy="8" r="2.250" fill="none" stroke="currentColor" stroke-width="1.700"/></svg>
<svg class="i" style="left:416px;top:1070px" width="30" height="12" viewBox="0 0 30 12" fill="none" stroke="#0b3b7d" stroke-width="1.8" stroke-linecap="round" stroke-linejoin="round" ><circle cx="14" cy="8" r="3.300"/><circle cx="5.500" cy="11" r="2.300"/><circle cx="22.500" cy="11" r="2.300"/></svg>

<div id="texts">
<span class="t" style="left:53.3px;top:77px;font-size:16px;line-height:16px;font-weight:700;color:#fff;letter-spacing:0.065px">Order a Service</span>
<span class="t" style="left:56.7px;top:126px;font-size:16px;line-height:16px;font-weight:400;color:#2b2d30;letter-spacing:0.315px">Dashboard</span>
<span class="t" style="left:56.7px;top:174px;font-size:16px;line-height:16px;font-weight:400;color:#2b2d30;letter-spacing:0.246px">Servers</span>
<span class="t" style="left:56.7px;top:222px;font-size:16px;line-height:16px;font-weight:400;color:#2b2d30;letter-spacing:0.362px">Shared Hosting</span>
<span class="t" style="left:56.7px;top:266px;font-size:16px;line-height:16px;font-weight:400;color:#2b2d30;letter-spacing:0.641px">Networking</span>
<span class="t" style="left:56.7px;top:318px;font-size:16px;line-height:16px;font-weight:400;color:#2b2d30;letter-spacing:0.463px">Orchestration</span>
<span class="t" style="left:56.4px;top:366px;font-size:16px;line-height:16px;font-weight:400;color:#2b2d30;letter-spacing:0.339px">Orders</span>
<span class="t" style="left:56.4px;top:423px;font-size:16px;line-height:16px;font-weight:400;color:#2b2d30;letter-spacing:0.592px">Support</span>
<span class="t" style="left:56.4px;top:471px;font-size:16px;line-height:16px;font-weight:400;color:#2b2d30;letter-spacing:0.185px">Billing</span>
<span class="t" style="left:56.4px;top:519px;font-size:16px;line-height:16px;font-weight:400;color:#2b2d30;letter-spacing:0.557px">Affiliates</span>
<span class="t" style="left:56.7px;top:857px;font-size:16px;line-height:16px;font-weight:400;color:#1d4c8c;letter-spacing:-0.500px">API</span>
<span class="t" style="left:56.7px;top:905px;font-size:16px;line-height:16px;font-weight:400;color:#1d4c8c;letter-spacing:0.392px">Help Center</span>
<span class="t" style="left:56.7px;top:953px;font-size:16px;line-height:16px;font-weight:400;color:#1d4c8c;letter-spacing:0.017px">VPSBG Website</span>
<span class="t" style="left:56.7px;top:1001px;font-size:16px;line-height:16px;font-weight:400;color:#1d4c8c;letter-spacing:0.246px">Share Feedback</span>
<span class="t" style="left:56.7px;top:1050px;font-size:16px;line-height:16px;font-weight:400;color:#2b2d30;letter-spacing:0.512px">Logout</span>
<span class="t" style="left:330.9px;top:25px;font-size:16px;line-height:16px;font-weight:400;color:#2b2d30;letter-spacing:0.513px">Two-Factor Authentication (2FA) is disabled.</span>
<span class="t" style="left:671.4px;top:25px;font-size:16px;line-height:16px;font-weight:700;color:#1a72bf;letter-spacing:0.138px">Activate now</span>
<span class="t" style="left:1328.3px;top:17px;font-size:12px;line-height:12px;font-weight:400;color:#6b6e72;letter-spacing:0.138px">Balance</span>
<span class="t" style="left:1328.3px;top:32px;font-size:16px;line-height:16px;font-weight:700;color:#222;letter-spacing:0.511px;transform:scaleX(1.100);transform-origin:0 0">€300.00</span>
<span class="t" style="left:1748.3px;top:25px;font-size:16px;line-height:16px;font-weight:400;color:#2b2d30;letter-spacing:0.312px">Username</span>
<span class="t" style="left:391.3px;top:118px;font-size:38px;line-height:38px;font-weight:700;color:#212529;letter-spacing:0.171px">Welcome,</span>
<span class="t" style="left:581.7px;top:118px;font-size:38px;line-height:38px;font-weight:700;color:#043a88;letter-spacing:-0.500px">User!</span>
<span class="t" style="left:456.7px;top:212px;font-size:24px;line-height:24px;font-weight:700;color:#212529;letter-spacing:0.267px">My Servers</span>
<span class="t" style="left:931.3px;top:216px;font-size:16px;line-height:16px;font-weight:400;color:#eaf4ff;letter-spacing:0.363px">Deploy Servers</span>
<span class="t" style="left:490.8px;top:376px;font-size:16px;line-height:16px;font-weight:700;color:#222;letter-spacing:0.160px">server-1</span>
<span class="t" style="left:469.0px;top:404px;font-size:14px;line-height:14px;font-weight:400;color:#666;letter-spacing:0.164px">89.231.252.21</span>
<span class="t" style="left:688.3px;top:376px;font-size:16px;line-height:16px;font-weight:700;color:#222;letter-spacing:0.343px">ubuntu-server</span>
<span class="t" style="left:696.7px;top:404px;font-size:14px;line-height:14px;font-weight:400;color:#666;letter-spacing:-0.050px">189.31.22.21</span>
<span class="t" style="left:940.0px;top:376px;font-size:16px;line-height:16px;font-weight:700;color:#222;letter-spacing:-0.107px">cpanell</span>
<span class="t" style="left:919.9px;top:404px;font-size:14px;line-height:14px;font-weight:400;color:#666;letter-spacing:-0.186px">180.21.22.21</span>
<span class="t" style="left:676.7px;top:479px;font-size:16px;line-height:16px;font-weight:400;color:#333;letter-spacing:0.393px">View All Servers</span>
<span class="t" style="left:1172.0px;top:212px;font-size:24px;line-height:24px;font-weight:700;color:#212529;letter-spacing:-0.037px">Account Balance</span>
<span class="t" style="left:1680.4px;top:216px;font-size:16px;line-height:16px;font-weight:400;color:#eaf4ff;letter-spacing:0.364px">Add Funds</span>
<span class="t" style="left:1224.9px;top:290px;font-size:16px;line-height:16px;font-weight:400;color:#8a8d91;letter-spacing:0.391px">Current Balance</span>
<span class="t" style="left:1223.7px;top:320px;font-size:32px;line-height:32px;font-weight:700;color:#0b3d82;letter-spacing:0.000px;transform:scaleX(1.070);transform-origin:0 0">€334.50</span>
<span class="t" style="left:1487.0px;top:290px;font-size:16px;line-height:16px;font-weight:400;color:#8a8d91;letter-spacing:0.376px">Estimated Expenses (30 Days)</span>
<span class="t" style="left:1566.8px;top:320px;font-size:32px;line-height:32px;font-weight:700;color:#222;letter-spacing:0.000px;transform:scaleX(1.062);transform-origin:0 0">€24.60</span>
<span class="t" style="left:1129.2px;top:409px;font-size:16px;line-height:16px;font-weight:700;color:#222;letter-spacing:0.035px">Last Deposit</span>
<span class="t" style="left:1173.5px;top:468px;font-size:14px;line-height:14px;font-weight:400;color:#333;letter-spacing:0.618px">23 Apr 2025</span>
<span class="t" style="left:1351.2px;top:468px;font-size:14px;line-height:14px;font-weight:700;color:#222;letter-spacing:0.168px;transform:scaleX(1.100);transform-origin:0 0">€ 50.00</span>
<span class="t" style="left:1529.3px;top:468px;font-size:14px;line-height:14px;font-weight:400;color:#333;letter-spacing:0.458px">Payment Method</span>
<span class="t" style="left:1706.3px;top:468px;font-size:14px;line-height:14px;font-weight:400;color:#eaf4ff;letter-spacing:0.189px">Repeat</span>
<span class="t" style="left:456.5px;top:583px;font-size:24px;line-height:24px;font-weight:700;color:#212529;letter-spacing:0.411px">My Tickets</span>
<span class="t" style="left:1477.5px;top:587px;font-size:16px;line-height:16px;font-weight:400;color:#333;letter-spacing:0.535px">View All Tickets</span>
<span class="t" style="left:1669.0px;top:587px;font-size:16px;line-height:16px;font-weight:400;color:#eaf4ff;letter-spacing:0.562px">Open Ticket</span>
<span class="t" style="left:456.5px;top:1074px;font-size:24px;line-height:24px;font-weight:700;color:#212529;letter-spacing:0.000px">Affiliate Program</span>
<span class="t" style="left:430.5px;top:654px;font-size:14px;line-height:14px;font-weight:700;color:#222;letter-spacing:0.242px">Title</span>
<span class="t" style="left:862.0px;top:654px;font-size:14px;line-height:14px;font-weight:700;color:#222;letter-spacing:0.356px">Department</span>
<span class="t" style="left:1041.0px;top:654px;font-size:14px;line-height:14px;font-weight:700;color:#222;letter-spacing:-0.079px">Last Reply At</span>
<span class="t" style="left:1220.0px;top:654px;font-size:14px;line-height:14px;font-weight:700;color:#222;letter-spacing:0.247px">Created At</span>
<span class="t" style="left:1399.0px;top:654px;font-size:14px;line-height:14px;font-weight:700;color:#222;letter-spacing:0.141px">Status</span>
<span class="t" style="left:430.5px;top:713px;font-size:14px;line-height:14px;font-weight:400;color:#333;letter-spacing:0.405px">Problem with connection and server, connection on my VPS</span>
<span class="t" style="left:862.0px;top:713px;font-size:14px;line-height:14px;font-weight:400;color:#333;letter-spacing:0.513px">Technical Support</span>
<span class="t" style="left:1041.0px;top:713px;font-size:14px;line-height:14px;font-weight:400;color:#333;letter-spacing:0.154px">11 Aug 2025 19:12</span>
<span class="t" style="left:1220.0px;top:713px;font-size:14px;line-height:14px;font-weight:400;color:#333;letter-spacing:0.441px">07 Apr 2025 15:08</span>
<span class="t" style="left:1712.8px;top:713px;font-size:14px;line-height:14px;font-weight:400;color:#2f3236;letter-spacing:0.169px">View</span>
<span class="t" style="left:430.5px;top:777px;font-size:14px;line-height:14px;font-weight:400;color:#333;letter-spacing:0.521px">Bandwidth upgrade</span>
<span class="t" style="left:862.0px;top:777px;font-size:14px;line-height:14px;font-weight:400;color:#333;letter-spacing:0.513px">Technical Support</span>
<span class="t" style="left:1041.0px;top:777px;font-size:14px;line-height:14px;font-weight:400;color:#333;letter-spacing:0.291px">12 Sep 2025 20:13</span>
<span class="t" style="left:1220.0px;top:777px;font-size:14px;line-height:14px;font-weight:400;color:#333;letter-spacing:0.477px">08 May 2025 16:09</span>
<span class="t" style="left:1712.8px;top:777px;font-size:14px;line-height:14px;font-weight:400;color:#2f3236;letter-spacing:0.169px">View</span>
<span class="t" style="left:430.5px;top:841px;font-size:14px;line-height:14px;font-weight:400;color:#333;letter-spacing:0.521px">Bandwidth upgrade</span>
<span class="t" style="left:862.0px;top:841px;font-size:14px;line-height:14px;font-weight:400;color:#333;letter-spacing:0.513px">Technical Support</span>
<span class="t" style="left:1041.0px;top:841px;font-size:14px;line-height:14px;font-weight:400;color:#333;letter-spacing:0.237px">13 Oct 2025 21:14</span>
<span class="t" style="left:1220.0px;top:841px;font-size:14px;line-height:14px;font-weight:400;color:#333;letter-spacing:0.281px">09 Jun 2025 17:10</span>
<span class="t" style="left:1712.8px;top:841px;font-size:14px;line-height:14px;font-weight:400;color:#2f3236;letter-spacing:0.169px">View</span>
<span class="t" style="left:430.5px;top:905px;font-size:14px;line-height:14px;font-weight:400;color:#333;letter-spacing:0.521px">Bandwidth upgrade</span>
<span class="t" style="left:862.0px;top:905px;font-size:14px;line-height:14px;font-weight:400;color:#333;letter-spacing:0.513px">Technical Support</span>
<span class="t" style="left:1041.0px;top:905px;font-size:14px;line-height:14px;font-weight:400;color:#333;letter-spacing:0.323px">14 Nov 2025 22:15</span>
<span class="t" style="left:1220.0px;top:905px;font-size:14px;line-height:14px;font-weight:400;color:#333;letter-spacing:0.107px">10 Jul 2025 18:11</span>
<span class="t" style="left:1712.8px;top:905px;font-size:14px;line-height:14px;font-weight:400;color:#2f3236;letter-spacing:0.169px">View</span>
<span class="t" style="left:1407.5px;top:714px;font-size:12px;line-height:12px;font-weight:400;color:#a9714a;letter-spacing:0.339px">Awaiting Support Response</span>
<span class="t" style="left:1407.5px;top:778px;font-size:12px;line-height:12px;font-weight:400;color:#a38d2e;letter-spacing:0.306px">Awaiting Customer Response</span>
<span class="t" style="left:1407.5px;top:842px;font-size:12px;line-height:12px;font-weight:400;color:#1f7cba;letter-spacing:0.133px">Replied</span>
<span class="t" style="left:1407.5px;top:906px;font-size:12px;line-height:12px;font-weight:400;color:#5fa85f;letter-spacing:0.210px">Resolved</span>
</div>
</body></html>
